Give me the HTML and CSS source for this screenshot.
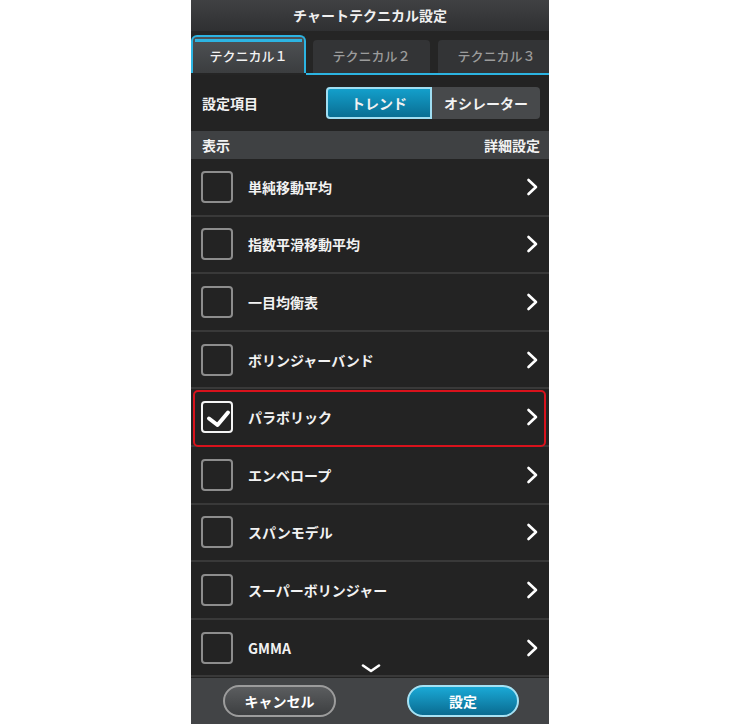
FILE: index.html
```html
<!DOCTYPE html>
<html lang="ja">
<head>
    <meta charset="UTF-8">
    <meta name="viewport" content="width=device-width, initial-scale=1.0">
    <title>チャートテクニカル設定</title>
    <link rel="stylesheet" href="styles.css">
</head>
<body>

    <div class="phone">
        <!-- Заголовок -->
        <div class="titlebar">チャートテクニカル設定</div>

        <!-- Вкладки -->
        <div class="tabs">
            <div class="tab-active"><span>テクニカル１</span></div>
            <div class="tabs-rest">
                <div class="tab">テクニカル２</div>
                <div class="tab">テクニカル３</div>
            </div>
        </div>

        <div class="setting-row">
            <span class="setting-label">設定項目</span>
            <div class="segment">
                <div class="segment-btn on">トレンド</div>
                <div class="segment-btn">オシレーター</div>
            </div>
        </div>

        <div class="list-head">
            <span>表示</span>
            <span>詳細設定</span>
        </div>

        <div class="list">
            <div class="row"><div class="check"></div><span class="label">単純移動平均</span><svg class="arrow" width="12" height="18" viewBox="0 0 12 18"><polyline points="2.5,2 10,9 2.5,16"/></svg></div>
            <div class="row"><div class="check"></div><span class="label">指数平滑移動平均</span><svg class="arrow" width="12" height="18" viewBox="0 0 12 18"><polyline points="2.5,2 10,9 2.5,16"/></svg></div>
            <div class="row"><div class="check"></div><span class="label">一目均衡表</span><svg class="arrow" width="12" height="18" viewBox="0 0 12 18"><polyline points="2.5,2 10,9 2.5,16"/></svg></div>
            <div class="row"><div class="check"></div><span class="label">ボリンジャーバンド</span><svg class="arrow" width="12" height="18" viewBox="0 0 12 18"><polyline points="2.5,2 10,9 2.5,16"/></svg></div>
            <div class="row selected">
                <div class="check checked">
                    <svg width="28" height="28" viewBox="0 0 28 28"><polyline points="6,15.5 14.5,22 25,9.5"/></svg>
                </div>
                <span class="label">パラボリック</span>
                <svg class="arrow" width="12" height="18" viewBox="0 0 12 18"><polyline points="2.5,2 10,9 2.5,16"/></svg>
            </div>
            <div class="row"><div class="check"></div><span class="label">エンベロープ</span><svg class="arrow" width="12" height="18" viewBox="0 0 12 18"><polyline points="2.5,2 10,9 2.5,16"/></svg></div>
            <div class="row"><div class="check"></div><span class="label">スパンモデル</span><svg class="arrow" width="12" height="18" viewBox="0 0 12 18"><polyline points="2.5,2 10,9 2.5,16"/></svg></div>
            <div class="row"><div class="check"></div><span class="label">スーパーボリンジャー</span><svg class="arrow" width="12" height="18" viewBox="0 0 12 18"><polyline points="2.5,2 10,9 2.5,16"/></svg></div>
            <div class="row"><div class="check"></div><span class="label">GMMA</span><svg class="arrow" width="12" height="18" viewBox="0 0 12 18"><polyline points="2.5,2 10,9 2.5,16"/></svg></div>

            <!-- Индикатор прокрутки -->
            <svg class="more" width="20" height="9" viewBox="0 0 20 9"><polyline points="2,1.5 10,7 18,1.5"/></svg>
        </div>

        <div class="footer">
            <div class="btn cancel">キャンセル</div>
            <div class="btn ok">設定</div>
        </div>
    </div>

</body>
</html>
```

FILE: styles.css
```css
/* Базовые стили */
body {
    margin: 0;
    background-color: #fff;
    display: flex;
    justify-content: center;
    font-family: "Noto Sans CJK JP", "Noto Sans", sans-serif;
    color: #f2f2f2;
}

.phone {
    width: 358px;
    height: 724px;
    background-color: #232323;
    display: flex;
    flex-direction: column;
    overflow: hidden;
}

/* Заголовок */
.titlebar {
    height: 31px;
    flex-shrink: 0;
    background: linear-gradient(#404143, #2f3032);
    text-align: center;
    line-height: 30px;
    font-size: 14px;
    font-weight: bold;
    color: #f0f0f0;
}

/* Вкладки */
.tabs {
    height: 44px;
    flex-shrink: 0;
    box-sizing: border-box;
    padding-top: 4px;
    background-color: #252525;
    display: flex;
}

.tab-active {
    width: 115px;
    flex-shrink: 0;
    box-sizing: border-box;
    margin-bottom: 2px;
    border: 2px solid #2cb4e2;
    border-bottom: 0;
    border-radius: 6px 6px 0 0;
    padding: 2px 2px 0;
    background: linear-gradient(#4f5255, #3b3d3f);
    display: flex;
}

.tab-active span {
    flex: 1;
    border-top: 3px solid #2cb4e2;
    text-align: center;
    line-height: 28px;
    font-size: 13px;
    font-weight: 500;
    color: #f2f2f2;
}

.tabs-rest {
    flex: 1;
    display: flex;
    gap: 8px;
    padding: 5px 0 0 7px;
    border-bottom: 2px solid #2cb4e2;
    overflow: hidden;
}

.tab {
    width: 117px;
    flex-shrink: 0;
    background-color: #333436;
    border-radius: 4px 4px 0 0;
    text-align: center;
    line-height: 32px;
    font-size: 13px;
    font-weight: 500;
    color: #9c9c9c;
}

/* Переключатель */
.setting-row {
    height: 56px;
    flex-shrink: 0;
    box-sizing: border-box;
    padding: 0 9px 0 11px;
    display: flex;
    align-items: center;
    justify-content: space-between;
}

.setting-label {
    font-size: 14px;
    font-weight: bold;
}

.segment {
    display: flex;
    height: 32px;
}

.segment-btn {
    width: 108px;
    box-sizing: border-box;
    background-color: #47494b;
    border-radius: 0 4px 4px 0;
    text-align: center;
    line-height: 32px;
    font-size: 14px;
    font-weight: bold;
    color: #f2f2f2;
}

.segment-btn.on {
    width: 106px;
    border: 2px solid #a0def2;
    border-radius: 4px 0 0 4px;
    line-height: 28px;
    background: linear-gradient(#139fcb, #0a6e93);
}

.list-head {
    height: 28px;
    flex-shrink: 0;
    box-sizing: border-box;
    padding: 0 9px 0 11px;
    background-color: #3f4143;
    display: flex;
    justify-content: space-between;
    align-items: center;
    font-size: 14px;
    font-weight: bold;
}

/* Список */
.list {
    flex: 1;
    position: relative;
    overflow: hidden;
}

.row {
    height: 57.6px;
    box-sizing: border-box;
    border-bottom: 2px solid #393939;
    padding: 0 11px 0 10px;
    display: flex;
    align-items: center;
    position: relative;
}

.check {
    width: 32px;
    height: 32px;
    flex-shrink: 0;
    box-sizing: border-box;
    border: 2px solid #8d8d8d;
    border-radius: 4px;
    display: flex;
}

.check.checked {
    border-color: #f4f4f4;
}

.check svg polyline {
    fill: none;
    stroke: #fff;
    stroke-width: 4;
    stroke-linecap: round;
    stroke-linejoin: round;
}

.label {
    flex: 1;
    margin-left: 15px;
    font-size: 14px;
    font-weight: bold;
    color: #f2f2f2;
}

.arrow polyline, .more polyline {
    fill: none;
    stroke: #fff;
    stroke-width: 2.6;
    stroke-linecap: round;
    stroke-linejoin: round;
}

/* Красная рамка выделения */
.row.selected::after {
    content: "";
    position: absolute;
    top: 1px;
    left: 2px;
    right: 3px;
    bottom: -2px;
    border: 2px solid #d8121c;
    border-radius: 5px;
}

.more {
    position: absolute;
    left: 170px;
    bottom: 5px;
}

/* Кнопки внизу */
.footer {
    height: 46px;
    flex-shrink: 0;
    box-sizing: border-box;
    padding: 0 30px 0 32px;
    background-color: #424446;
    display: flex;
    align-items: center;
    justify-content: space-between;
}

.btn {
    width: 113px;
    height: 32px;
    box-sizing: border-box;
    border-radius: 16px;
    text-align: center;
    line-height: 28px;
    font-size: 14px;
    font-weight: bold;
    color: #fff;
}

.btn.cancel {
    border: 2px solid #9c9c9c;
    background: linear-gradient(#5b5d5f, #3d3f41);
}

.btn.ok {
    width: 112px;
    border: 2px solid #a6e2f4;
    background: linear-gradient(#1aa9d6, #0a6b90);
}
```
